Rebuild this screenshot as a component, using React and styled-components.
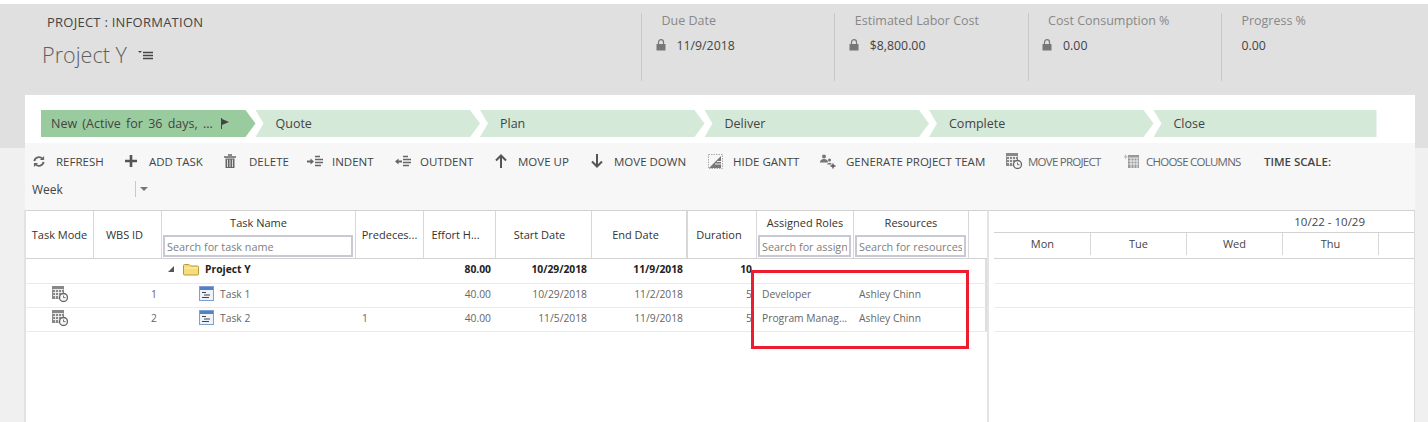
import React from 'react'
import styled, { createGlobalStyle } from 'styled-components'

const GlobalStyle = createGlobalStyle`
  html, body { margin: 0; padding: 0; height: 422px; overflow: hidden; background: #fff; }
  * { box-sizing: border-box; }
  body { font-family: "Open Sans", "Noto Sans", sans-serif; font-size: 12px; color: #444; }
`

const Page = styled.div`
  position: relative;
  width: 1428px;
  height: 422px;
  padding-top: 4px;
  overflow: hidden;
  background: linear-gradient(#fff 0 4px, #e0e0e0 4px 148px, #f0f0f0 148px);
`
const Header = styled.header`
  display: flex;
  height: 91px;
  padding-top: 9px;
`
const TitleBlock = styled.div`
  width: 641px;
  padding: 0 0 0 42px;
`
const Breadcrumb = styled.div`
  margin: 0 0 0 5px;
  font-size: 13px;
  letter-spacing: 0.25px;
  line-height: 18px;
  color: #444;
`
const ProjectName = styled.div`
  display: flex;
  align-items: center;
  gap: 11px;
  margin-top: 9px;
  font-size: 21.6px;
  font-weight: 300;
  line-height: 30px;
  color: #5f5f5f;
`
const Stat = styled.div`
  width: 193.3px;
  height: 68px;
  padding-left: 13.5px;
  border-left: 1px solid #c8c8c8;
`
const StatLabel = styled.div`
  margin-left: 6px;
  font-size: 12.5px;
  line-height: 16px;
  color: #888;
`
const StatValue = styled.div`
  display: flex;
  align-items: center;
  gap: 11px;
  margin-top: 9px;
  margin-left: ${p => (p.$locked ? 0 : 6)}px;
  font-size: 12.3px;
  line-height: 16px;
  color: #444;
`
const LockMark = styled.svg`
  margin-top: -3px;
`
const Panel = styled.section`
  margin: 0 13px 0 25px;
  background: #fff;
  height: 48px;
  padding: 15px 0 0 16px;
`
const Stages = styled.div`
  display: flex;
  height: 27px;
`
const Stage = styled.div`
  flex: none;
  width: ${p => p.$w}px;
  display: flex;
  align-items: center;
  gap: 7px;
  padding: 0 0 1px ${p => (p.$first ? 10 : 20)}px;
  font-size: 12.5px;
  word-spacing: ${p => (p.$first ? 2 : 0)}px;
  white-space: nowrap;
  color: #444;
  background: ${p => (p.$active ? '#9acb9e' : '#d4e9d8')};
  clip-path: ${p =>
    p.$first
      ? 'polygon(0 0, calc(100% - 10px) 0, 100% 50%, calc(100% - 10px) 100%, 0 100%)'
      : p.$last
      ? 'polygon(0 0, 100% 0, 100% 100%, 0 100%, 8px 50%)'
      : 'polygon(0 0, calc(100% - 10px) 0, 100% 50%, calc(100% - 10px) 100%, 0 100%, 8px 50%)'};
`
const Toolbar = styled.div`
  margin: 0 13px 0 25px;
  height: 67px;
  padding: 6px 0 0 8px;
  background: #f7f7f7;
`
const ToolRow = styled.div`
  display: flex;
  align-items: center;
  height: 24px;
`
const Tool = styled.div`
  display: flex;
  align-items: center;
  flex: none;
  width: ${p => p.$w}px;
  font-size: 11.5px;
  white-space: nowrap;
  color: ${p => (p.$muted ? '#666' : '#444')};
  letter-spacing: ${p => (p.$muted ? '-0.75px' : '0')};
  font-weight: ${p => (p.$bold ? 600 : 400)};
`
const ToolIcon = styled.span`
  display: flex;
  justify-content: center;
  flex: none;
  width: ${p => p.$w}px;
  margin-right: ${p => p.$gap}px;
`
const WeekRow = styled.div`
  display: flex;
  align-items: center;
  margin: 4px 0 0 -1px;
  height: 24px;
`
const WeekText = styled.span`
  width: 103px;
  font-size: 12px;
  color: #444;
`
const WeekSplit = styled.span`
  width: 1px;
  height: 16px;
  background: #c8c8c8;
  margin-right: 4px;
`
const Caret = styled.span`
  width: 0;
  height: 0;
  border-left: 4px solid transparent;
  border-right: 4px solid transparent;
  border-top: 4px solid #777;
`
const Body = styled.div`
  display: flex;
  height: 212px;
  margin: 0 13px 0 24px;
  border-left: 2px solid #e2e2e2;
  background: #fff;
`
const GridPane = styled.div`
  flex: none;
  width: 963px;
  border-top: 1px solid #d2d2d2;
  border-right: 2px solid #e4e4e4;
`
const Row = styled.div`
  display: grid;
  grid-template-columns: 68px 68px 194px 68px 72px 96px 96px 69px 97px 115px;
  height: ${p => p.$h}px;
  border-bottom: 1px solid ${p => (p.$head ? '#d2d2d2' : '#ebebeb')};
  border-right: ${p => (p.$head ? 0 : 2)}px solid #dedede;
`
const HeadCell = styled.div`
  display: flex;
  flex-direction: column;
  align-items: center;
  justify-content: center;
  padding-right: ${p => p.$pr || 0}px;
  border-right: ${p => (p.$thick ? 2 : 1)}px solid #d8d8d8;
  font-size: 11px;
  color: #333;
  white-space: nowrap;
  overflow: hidden;
`
const HeadSearch = styled.div`
  display: flex;
  flex-direction: column;
  border-right: 1px solid #d8d8d8;
  overflow: hidden;
`
const HeadTitle = styled.div`
  height: 24px;
  line-height: 24px;
  text-align: center;
  font-size: 11px;
  color: #333;
`
const SearchBox = styled.input`
  display: block;
  width: calc(100% - 3px);
  height: 22px;
  margin: 0 1px;
  padding: 0 2px;
  border: 2px solid #c9c9d6;
  background: #fff;
  font: 10.8px "Open Sans", sans-serif;
  color: #666;
  &::placeholder { color: #808080; opacity: 1; }
`
const Cell = styled.div`
  display: flex;
  align-items: center;
  justify-content: ${p => (p.$right ? 'flex-end' : p.$center ? 'center' : 'flex-start')};
  gap: ${p => p.$gap || 0}px;
  padding: ${p => (p.$right ? '0 5px 4px 0' : `0 0 4px ${p.$indent || 0}px`)};
  font-size: 10.3px;
  font-weight: ${p => (p.$bold ? 700 : 400)};
  color: ${p => (p.$bold ? '#222' : '#666')};
  white-space: nowrap;
  overflow: hidden;
`
const ExpanderMark = styled.svg`
  margin-right: 3px;
  flex: none;
`
const Gantt = styled.div`
  flex: 1;
  padding-left: 5px;
  border-top: 1px solid #d2d2d2;
  border-right: 1px solid #dcdcdc;
`
const GanttHead = styled.div`
  height: 48px;
  border-bottom: 1px solid #d2d2d2;
`
const GanttRange = styled.div`
  height: 22px;
  line-height: 22px;
  padding-right: 49px;
  text-align: right;
  font-size: 11.5px;
  color: #444;
  border-bottom: 1px solid #d2d2d2;
`
const GanttDays = styled.div`
  display: flex;
  padding-left: 1px;
`
const GanttDay = styled.div`
  width: 96px;
  height: 22px;
  flex: none;
  line-height: 21px;
  text-align: center;
  font-size: 11px;
  color: #444;
  border-right: 1px solid #d8d8d8;
`
const GanttRow = styled.div`
  height: ${p => p.$h}px;
  border-bottom: 1px solid #ebebeb;
`
const Callout = styled.div`
  position: absolute;
  left: 751px;
  top: 270px;
  width: 218px;
  height: 79px;
  border: 3px solid #ed1c2e;
`

const Lock = () => (
  <LockMark width="10" height="12" viewBox="0 0 10 12">
    <path d="M2.5 5V3.2a2.5 2.5 0 0 1 5 0V5" fill="none" stroke="#777" strokeWidth="1.2" />
    <rect x="0.5" y="5" width="9" height="6.5" fill="#777" />
  </LockMark>
)

const ListIcon = () => (
  <svg width="15" height="10" viewBox="0 0 15 10">
    <path d="M0 1h4L2 3z" fill="#444" />
    <path d="M5 2.5h10M5 5.5h10M5 8.5h10" stroke="#444" strokeWidth="1.6" />
  </svg>
)

const FlagIcon = () => (
  <svg width="10" height="11" viewBox="0 0 10 11">
    <path d="M1.5 0v11" stroke="#444" strokeWidth="1" />
    <path d="M2 1l7 3-7 3z" fill="#444" />
  </svg>
)

const RefreshIcon = () => (
  <svg width="13" height="13" viewBox="0 0 13 13" fill="none" stroke="#666" strokeWidth="2">
    <path d="M1.5 6a5 5 0 0 1 8.6-2.6" />
    <path d="M11.5 7a5 5 0 0 1-8.6 2.6" />
    <path d="M12 0.5v4.5H7.5zM1 12.5V8h4.5z" fill="#666" stroke="none" />
  </svg>
)

const PlusIcon = () => (
  <svg width="14" height="14" viewBox="0 0 14 14">
    <path d="M7 1v12M1 7h12" stroke="#555" strokeWidth="2.6" />
  </svg>
)

const TrashIcon = () => (
  <svg width="12" height="14" viewBox="0 0 12 14">
    <path d="M4 1h4M0 3h12" stroke="#666" strokeWidth="1.4" />
    <path d="M1.5 4.5h9V14h-9z" fill="#666" />
    <path d="M3.5 5.5v7.5M6 5.5v7.5M8.5 5.5v7.5" stroke="#f7f7f7" strokeWidth="0.8" />
  </svg>
)

const IndentIcon = ({ flip }) => (
  <svg width="16" height="13" viewBox="0 0 16 13">
    {flip
      ? <path d="M0 6.5L3.5 3.5v2H7v2H3.5v2z" fill="#666" />
      : <path d="M7 6.5L3.5 3.5v2H0v2h3.5v2z" fill="#666" />}
    <path d="M8 1.5h5M8 4.5h8M8 7.5h8M8 10.5h6" stroke="#666" strokeWidth="1.3" />
  </svg>
)

const ArrowIcon = ({ down }) => (
  <svg width="12" height="14" viewBox="0 0 12 14">
    <path
      d={down ? 'M6 0v12M1 7.5L6 12.5l5-5' : 'M6 14V2M1 6.5L6 1.5l5 5'}
      fill="none"
      stroke="#555"
      strokeWidth="2"
    />
  </svg>
)

const GanttIcon = () => (
  <svg width="15" height="15" viewBox="0 0 15 15">
    <rect x="0.5" y="0.5" width="14" height="14" fill="none" stroke="#aaa" strokeDasharray="1.5 1" />
    <path d="M1 14L13 2v12z" fill="#777" />
    <path d="M7 10h6M9 7.5h4" stroke="#eee" strokeWidth="1" />
  </svg>
)

const TeamIcon = () => (
  <svg width="16" height="15" viewBox="0 0 16 15">
    <circle cx="4" cy="2.5" r="2" fill="#777" />
    <path d="M0 8.5a4 3.5 0 0 1 8 0z" fill="#777" />
    <circle cx="9.5" cy="6" r="1.6" fill="#777" />
    <path d="M7 10.5a2.6 2.5 0 0 1 5 0z" fill="#777" />
    <path d="M13 9.5v5M10.5 12h5" stroke="#555" strokeWidth="1.4" />
  </svg>
)

const ScheduleIcon = () => (
  <svg width="16" height="16" viewBox="0 0 16 16">
    <rect x="0" y="0" width="12" height="13" fill="#888" />
    <path d="M0.5 3.5h11M1 6.5h10M1 9.5h10M3.5 3.5v9M6.5 3.5v9M9.5 3.5v9" stroke="#f2f2f2" strokeWidth="0.9" />
    <circle cx="11.5" cy="11.5" r="4" fill="#f7f7f7" stroke="#666" strokeWidth="1.3" />
    <path d="M11.5 9.5v2.2h2" fill="none" stroke="#666" strokeWidth="0.9" />
  </svg>
)

const ColumnsIcon = () => (
  <svg width="16" height="15" viewBox="0 0 16 15">
    <path d="M1.5 0l.8 2 2 .8-2 .8-.8 2-.8-2-.7-.8.7-.8z" fill="#bbb" />
    <rect x="4" y="1" width="11" height="13" fill="#999" />
    <path d="M4.5 4h10M4.5 7h10M4.5 10h10M7 4v10M10 4v10M13 4v10" stroke="#f5f5f5" strokeWidth="0.9" />
  </svg>
)

const TaskIcon = () => (
  <svg width="15" height="15" viewBox="0 0 15 15">
    <rect x="0.5" y="0.5" width="14" height="14" fill="#eef3fa" stroke="#7f9fd0" />
    <rect x="1" y="1" width="13" height="3" fill="#4f81c7" />
    <path d="M3 6.5h4M5 9h6M3 11.5h7" stroke="#444" strokeWidth="1.2" />
  </svg>
)

const FolderIcon = () => (
  <svg width="16" height="13" viewBox="0 0 16 13">
    <path d="M0.5 2.5a1 1 0 0 1 1-1H6l1.5 1.5h7a1 1 0 0 1 1 1V11a1 1 0 0 1-1 1h-13a1 1 0 0 1-1-1z" fill="#f7dc7c" stroke="#b99b3c" />
    <path d="M1 5h14" stroke="#fff2b8" strokeWidth="1" />
  </svg>
)

const Expander = () => (
  <ExpanderMark width="6" height="6" viewBox="0 0 6 6">
    <path d="M6 0v6H0z" fill="#555" />
  </ExpanderMark>
)

const stats = [
  { label: 'Due Date', value: '11/9/2018', locked: true },
  { label: 'Estimated Labor Cost', value: '$8,800.00', locked: true },
  { label: 'Cost Consumption %', value: '0.00', locked: true },
  { label: 'Progress %', value: '0.00', locked: false },
]

const stages = [
  { name: 'New (Active for 36 days, ...', w: 214.5, first: true, active: true },
  { name: 'Quote', w: 224.5 },
  { name: 'Plan', w: 224.5 },
  { name: 'Deliver', w: 224.5 },
  { name: 'Complete', w: 224.5 },
  { name: 'Close', w: 223, last: true },
]

const tools = [
  { label: 'REFRESH', icon: <RefreshIcon />, w: 91, iw: 12, gap: 11 },
  { label: 'ADD TASK', icon: <PlusIcon />, w: 100, iw: 14, gap: 11 },
  { label: 'DELETE', icon: <TrashIcon />, w: 83, iw: 12, gap: 13 },
  { label: 'INDENT', icon: <IndentIcon />, w: 88, iw: 16, gap: 9 },
  { label: 'OUTDENT', icon: <IndentIcon flip />, w: 100, iw: 16, gap: 9 },
  { label: 'MOVE UP', icon: <ArrowIcon />, w: 96, iw: 12, gap: 11 },
  { label: 'MOVE DOWN', icon: <ArrowIcon down />, w: 117, iw: 12, gap: 11 },
  { label: 'HIDE GANTT', icon: <GanttIcon />, w: 112, iw: 15, gap: 10 },
  { label: 'GENERATE PROJECT TEAM', icon: <TeamIcon />, w: 186, iw: 16, gap: 10 },
  { label: 'MOVE PROJECT', icon: <ScheduleIcon />, w: 118, iw: 16, gap: 6, muted: true },
  { label: 'CHOOSE COLUMNS', icon: <ColumnsIcon />, w: 140, iw: 16, gap: 6, muted: true },
  { label: 'TIME SCALE:', bold: true, w: 80 },
]

const tasks = [
  { id: '1', name: 'Task 1', pred: '', effort: '40.00', start: '10/29/2018', end: '11/2/2018', dur: '5', role: 'Developer', res: 'Ashley Chinn' },
  { id: '2', name: 'Task 2', pred: '1', effort: '40.00', start: '11/5/2018', end: '11/9/2018', dur: '5', role: 'Program Manag...', res: 'Ashley Chinn' },
]

function App() {
  return (
    <Page>
      <GlobalStyle />
      <Header>
        <TitleBlock>
          <Breadcrumb>PROJECT : INFORMATION</Breadcrumb>
          <ProjectName>Project Y <ListIcon /></ProjectName>
        </TitleBlock>
        {stats.map(s => (
          <Stat key={s.label}>
            <StatLabel>{s.label}</StatLabel>
            <StatValue $locked={s.locked}>
              {s.locked && <Lock />}
              {s.value}
            </StatValue>
          </Stat>
        ))}
      </Header>
      <Panel>
        <Stages>
          {stages.map(s => (
            <Stage key={s.name} $w={s.w} $first={s.first} $last={s.last} $active={s.active}>
              {s.name}
              {s.active && <FlagIcon />}
            </Stage>
          ))}
        </Stages>
      </Panel>
      <Toolbar>
        <ToolRow>
          {tools.map(t => (
            <Tool key={t.label} $w={t.w} $muted={t.muted} $bold={t.bold}>
              {t.icon && <ToolIcon $w={t.iw} $gap={t.gap}>{t.icon}</ToolIcon>}
              {t.label}
            </Tool>
          ))}
        </ToolRow>
        <WeekRow>
          <WeekText>Week</WeekText>
          <WeekSplit />
          <Caret />
        </WeekRow>
      </Toolbar>
      <Body>
        <GridPane>
          <Row $head $h={48}>
            <HeadCell>Task Mode</HeadCell>
            <HeadCell $pr={6}>WBS ID</HeadCell>
            <HeadSearch>
              <HeadTitle>Task Name</HeadTitle>
              <SearchBox placeholder="Search for task name" readOnly />
            </HeadSearch>
            <HeadCell>Predeces...</HeadCell>
            <HeadCell $pr={8}>Effort H...</HeadCell>
            <HeadCell $pr={8}>Start Date</HeadCell>
            <HeadCell $thick $pr={7}>End Date</HeadCell>
            <HeadCell $pr={6}>Duration</HeadCell>
            <HeadSearch>
              <HeadTitle>Assigned Roles</HeadTitle>
              <SearchBox placeholder="Search for assigned roles" readOnly />
            </HeadSearch>
            <HeadSearch>
              <HeadTitle>Resources</HeadTitle>
              <SearchBox placeholder="Search for resources" readOnly />
            </HeadSearch>
          </Row>
          <Row $h={25}>
            <Cell />
            <Cell />
            <Cell $bold $indent={6} $gap={6}><Expander /><FolderIcon />Project Y</Cell>
            <Cell />
            <Cell $bold $right>80.00</Cell>
            <Cell $bold $right>10/29/2018</Cell>
            <Cell $bold $right>11/9/2018</Cell>
            <Cell $bold $right>10</Cell>
            <Cell />
            <Cell />
          </Row>
          {tasks.map(t => (
            <Row key={t.id} $h={24}>
              <Cell $center><ScheduleIcon /></Cell>
              <Cell $right>{t.id}</Cell>
              <Cell $indent={37} $gap={6}><TaskIcon />{t.name}</Cell>
              <Cell $indent={6}>{t.pred}</Cell>
              <Cell $right>{t.effort}</Cell>
              <Cell $right>{t.start}</Cell>
              <Cell $right>{t.end}</Cell>
              <Cell $right>{t.dur}</Cell>
              <Cell $indent={5}>{t.role}</Cell>
              <Cell $indent={5}>{t.res}</Cell>
            </Row>
          ))}
        </GridPane>
        <Gantt>
          <GanttHead>
            <GanttRange>10/22 - 10/29</GanttRange>
            <GanttDays>
              {['Mon', 'Tue', 'Wed', 'Thu'].map(d => <GanttDay key={d}>{d}</GanttDay>)}
            </GanttDays>
          </GanttHead>
          <GanttRow $h={25} />
          <GanttRow $h={24} />
          <GanttRow $h={24} />
        </Gantt>
      </Body>
      <Callout />
    </Page>
  )
}

export default App
